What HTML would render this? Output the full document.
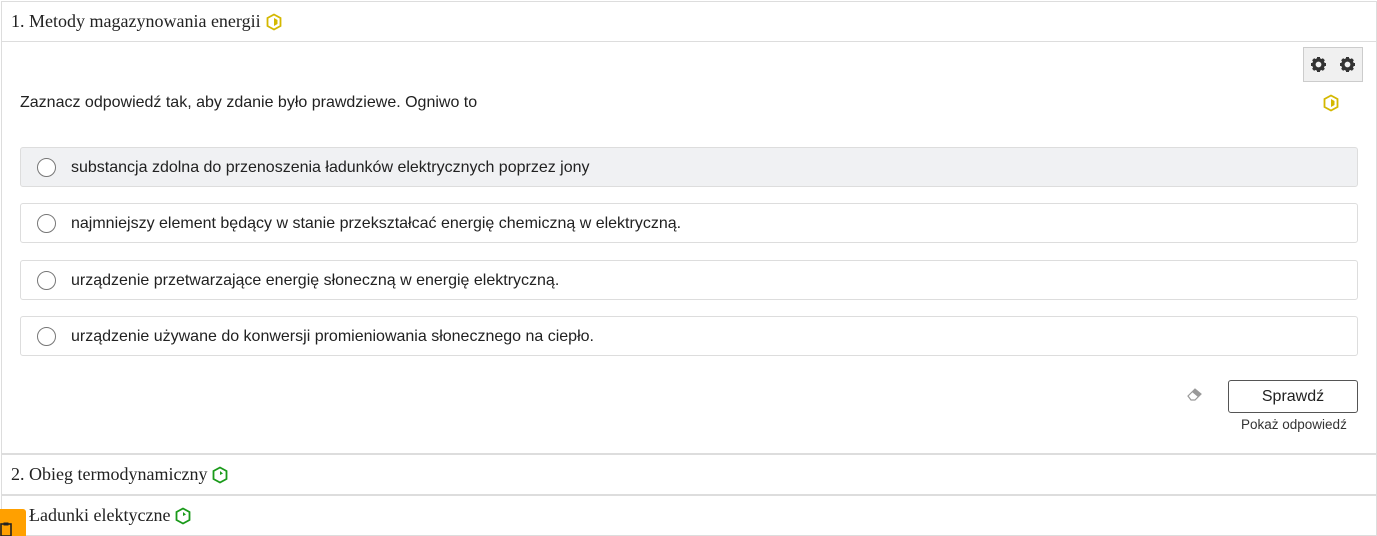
<!DOCTYPE html>
<html><head><meta charset="utf-8"><style>
*{box-sizing:border-box;margin:0;padding:0}
body{width:1377px;height:536px;background:#fff;font-family:"Liberation Sans",sans-serif;color:#212121;position:relative;overflow:hidden}
.abs{position:absolute}
.hdr{position:absolute;left:1px;width:1376px;border:1px solid #ddd;font-family:"Liberation Serif",serif;font-size:18px;color:#222;padding-left:9px;display:flex;align-items:center;gap:5px}
.opt{position:absolute;left:20px;width:1338px;height:40px;border:1px solid #ddd;border-radius:3px;font-size:16px}
.opt .r{position:absolute;left:16px;top:10px;width:19px;height:19px;border:1.5px solid #777;border-radius:50%;background:#fff}
.opt span{position:absolute;left:50px;top:11px;line-height:18px}
</style></head><body>
<div class="hdr" style="top:1px;height:41px">1. Metody magazynowania energii
<svg width="16" height="18" viewBox="0 0 16 18"><path d="M8 1.5L14.5 5v8L8 16.5 1.5 13V5z" fill="none" stroke="#d4b800" stroke-width="1.8"/><path d="M8 5v8l3.5-2V7z" fill="#d4b800"/></svg></div>
<div class="abs" style="left:1px;top:41px;width:1376px;height:413px;border:1px solid #ddd;border-top:none"></div>
<div class="abs" style="left:1303px;top:47px;width:60px;height:35px;background:#f0f0f0;border:1px solid #ccc"></div>
<svg class="abs" style="left:1311px;top:57px" width="15" height="15" viewBox="0 0 14 14"><circle cx="7" cy="7" r="4.3" fill="none" stroke="#333" stroke-width="3.2"/><g stroke="#333" stroke-width="2.8"><path d="M7 0v3M7 11v3M0 7h3M11 7h3M2 2l2 2M10 10l2 2M12 2l-2 2M2 12l2-2"/></g></svg>
<svg class="abs" style="left:1340px;top:57px" width="15" height="15" viewBox="0 0 14 14"><circle cx="7" cy="7" r="4.3" fill="none" stroke="#333" stroke-width="3.2"/><g stroke="#333" stroke-width="2.8"><path d="M7 0v3M7 11v3M0 7h3M11 7h3M2 2l2 2M10 10l2 2M12 2l-2 2M2 12l2-2"/></g></svg>
<svg class="abs" style="left:1323px;top:94px" width="16" height="18" viewBox="0 0 16 18"><path d="M8 1.5L14.5 5v8L8 16.5 1.5 13V5z" fill="none" stroke="#d4b800" stroke-width="1.8"/><path d="M8 5v8l3.5-2V7z" fill="#d4b800"/></svg>
<div class="abs" style="left:20px;top:94px;font-size:16px;line-height:18px">Zaznacz odpowiedź tak, aby zdanie było prawdziewe. Ogniwo to</div>
<div class="opt" style="top:147px;background:#f0f1f3"><div class="r"></div><span>substancja zdolna do przenoszenia ładunków elektrycznych poprzez jony</span></div>
<div class="opt" style="top:203px"><div class="r"></div><span>najmniejszy element będący w stanie przekształcać energię chemiczną w elektryczną.</span></div>
<div class="opt" style="top:260px"><div class="r"></div><span>urządzenie przetwarzające energię słoneczną w energię elektryczną.</span></div>
<div class="opt" style="top:316px"><div class="r"></div><span>urządzenie używane do konwersji promieniowania słonecznego na ciepło.</span></div>
<svg class="abs" style="left:1186px;top:387px" width="18" height="14" viewBox="0 0 18 14"><path d="M2 9l7-7 6 5-6 6H5z" fill="#fff" stroke="#999" stroke-width="1.2"/><path d="M9 2l6 5-3 3-6-5z" fill="#999"/></svg>
<div class="abs" style="left:1228px;top:380px;width:130px;height:33px;border:1px solid #555;border-radius:3px;font-size:16px;display:flex;align-items:center;justify-content:center">Sprawdź</div>
<div class="abs" style="left:1241px;top:417px;font-size:13.5px;color:#333">Pokaż odpowiedź</div>
<div class="hdr" style="top:454px;height:41px">2. Obieg termodynamiczny
<svg width="16" height="18" viewBox="0 0 16 18"><path d="M8 1.5L14.5 5v8L8 16.5 1.5 13V5z" fill="none" stroke="#1a9a1a" stroke-width="1.8"/><path d="M8 5v4l3-1.5z" fill="#1a9a1a"/></svg></div>
<div class="hdr" style="top:495px;height:41px">3. Ładunki elektyczne
<svg width="16" height="18" viewBox="0 0 16 18"><path d="M8 1.5L14.5 5v8L8 16.5 1.5 13V5z" fill="none" stroke="#1a9a1a" stroke-width="1.8"/><path d="M8 5v4l3-1.5z" fill="#1a9a1a"/></svg></div>
<div class="abs" style="left:0;top:509px;width:26px;height:27px;background:#ffa000;border-radius:0 3px 0 0"></div>
<svg class="abs" style="left:0;top:522px" width="12" height="14" viewBox="0 0 12 14"><rect x="1" y="2" width="10" height="12" fill="none" stroke="#222" stroke-width="1.6"/><rect x="3.5" y="0.5" width="5" height="3" fill="#222"/></svg>
</body></html>
